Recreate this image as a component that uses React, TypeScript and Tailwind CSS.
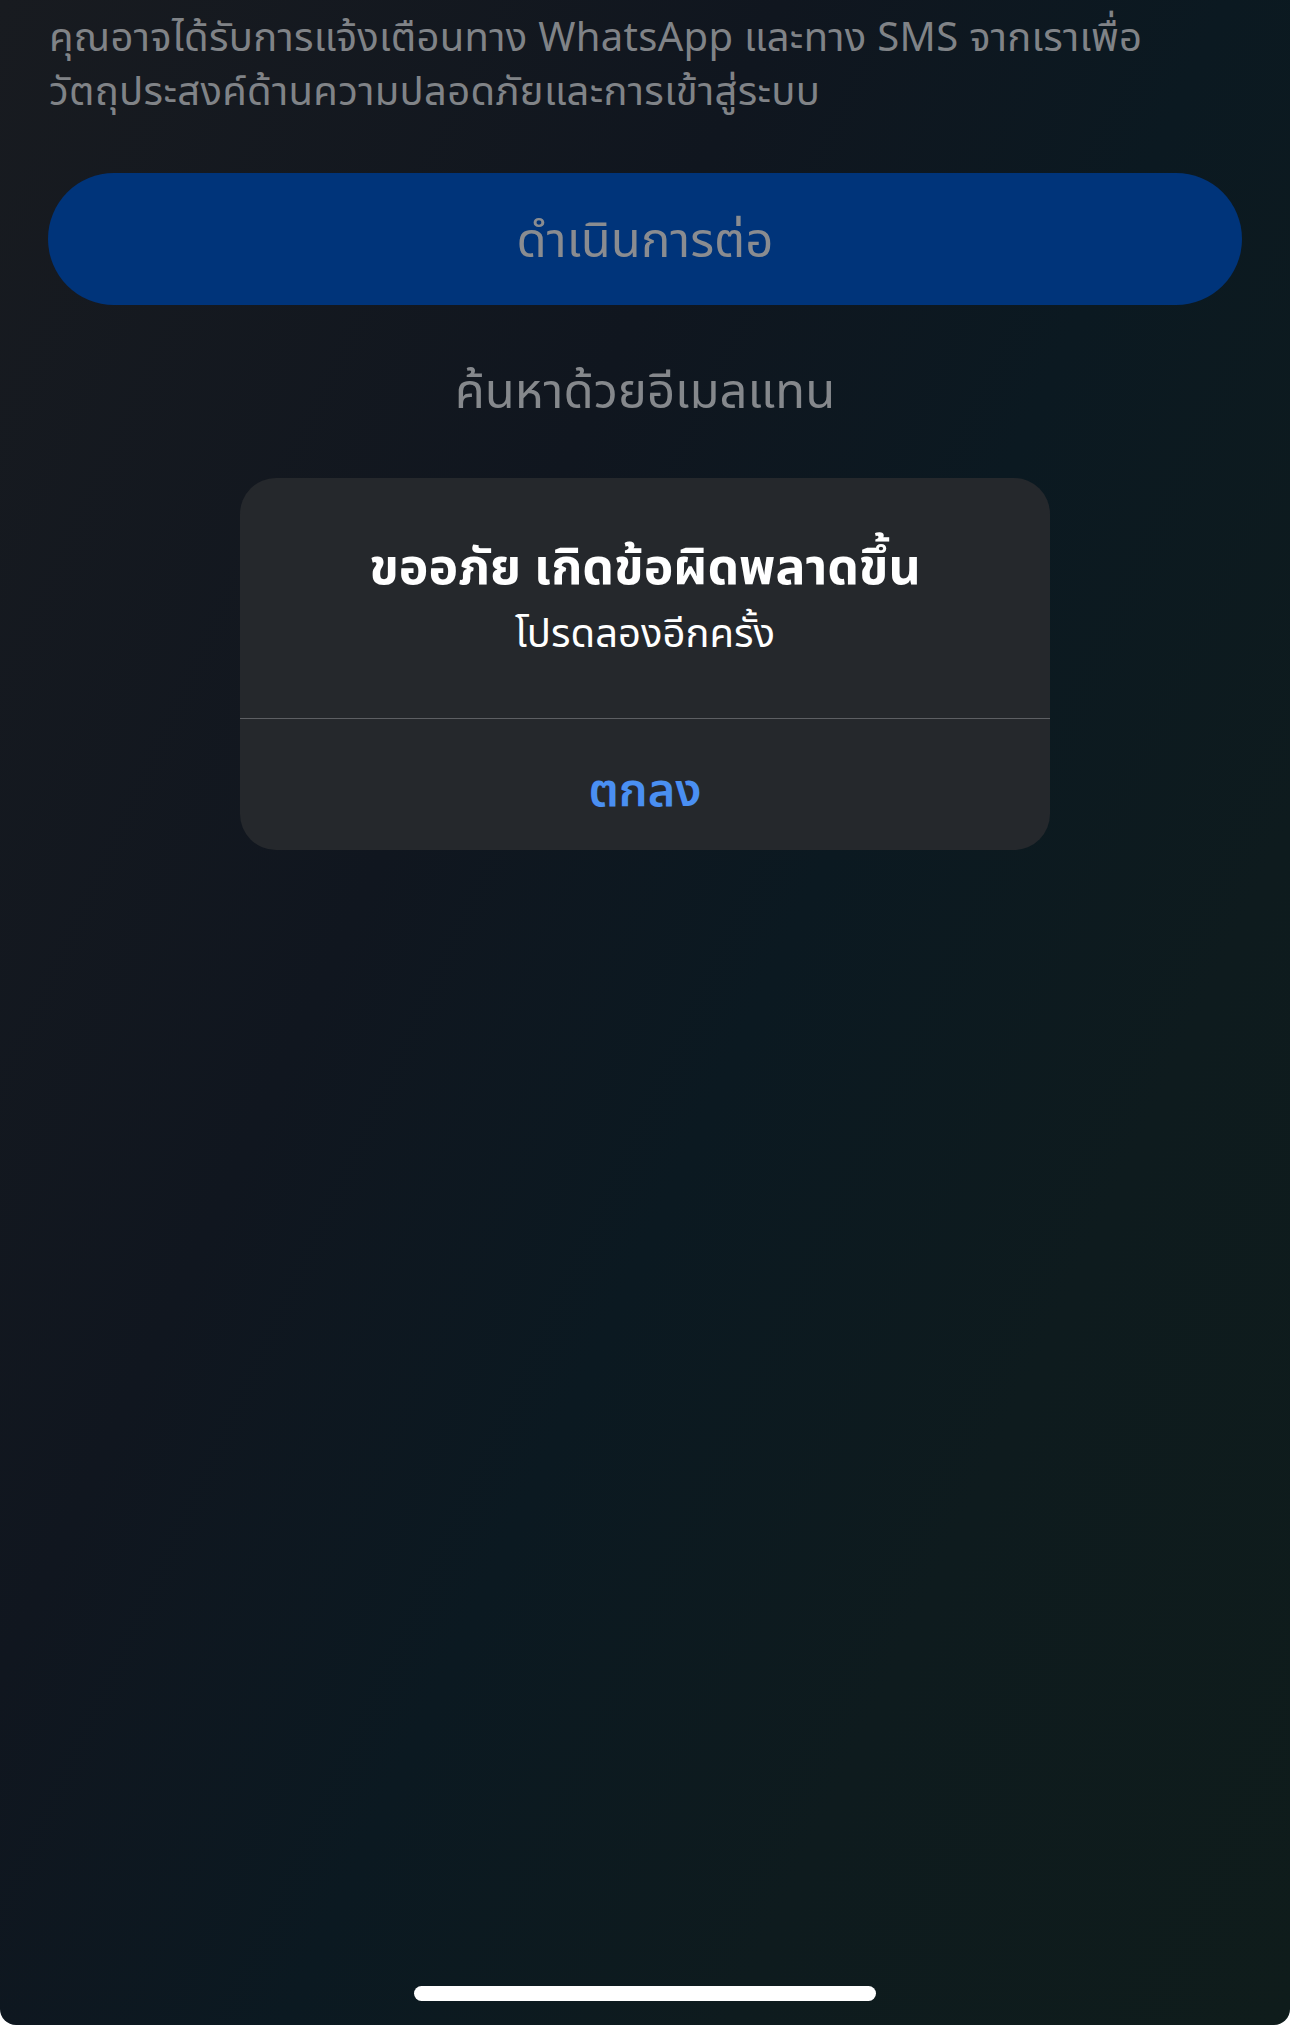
import React from "react";

const thai = { fontFamily: '"Noto Sans Thai", "Noto Sans Thai UI", "Noto Sans", "Liberation Sans", sans-serif' };

export default function App() {
  return (
    <div className="w-[1290px] h-[2025px] bg-white" style={thai}>
      <div className="relative w-full h-full overflow-hidden rounded-b-[16px] bg-[linear-gradient(115deg,#181b20_0%,#10161f_35%,#0b1921_55%,#0e1b1e_75%,#0f1c1b_100%)]">
        <div className="px-[49px] pt-[12px] text-[40px] leading-[54px] tracking-[0.3px] text-[#808387] whitespace-nowrap">
          คุณอาจได้รับการแจ้งเตือนทาง WhatsApp และทาง SMS จากเราเพื่อ
          <br />
          วัตถุประสงค์ด้านความปลอดภัยและการเข้าสู่ระบบ
        </div>
        <div className="mx-[48px] mt-[53px] h-[132px] rounded-full bg-[#00347a] flex items-center justify-center pt-[8px] text-[49px] text-[#8a8c90]">
          ดำเนินการต่อ
        </div>
        <div className="mt-[56px] text-center text-[49px] leading-[64px] text-[#85888c]">
          ค้นหาด้วยอีเมลแทน
        </div>

        <div className="absolute left-[240px] top-[478px] w-[810px] h-[372px] rounded-[36px] bg-[#25282c] flex flex-col">
          <div className="h-[240px] flex flex-col items-center pt-[60px]">
            <div className="text-[50px] leading-[62px] font-bold text-white">ขออภัย เกิดข้อผิดพลาดขึ้น</div>
            <div className="mt-[6px] text-[40px] leading-[58px] text-white">โปรดลองอีกครั้ง</div>
          </div>
          <div className="h-px bg-[#5d5f63]" />
          <div className="flex-1 flex items-center justify-center pt-[16px] text-[47px] font-semibold text-[#4a8ff2]">
            ตกลง
          </div>
        </div>

        <div className="absolute left-[414px] top-[1986px] w-[462px] h-[15px] rounded-full bg-white" />
      </div>
    </div>
  );
}
